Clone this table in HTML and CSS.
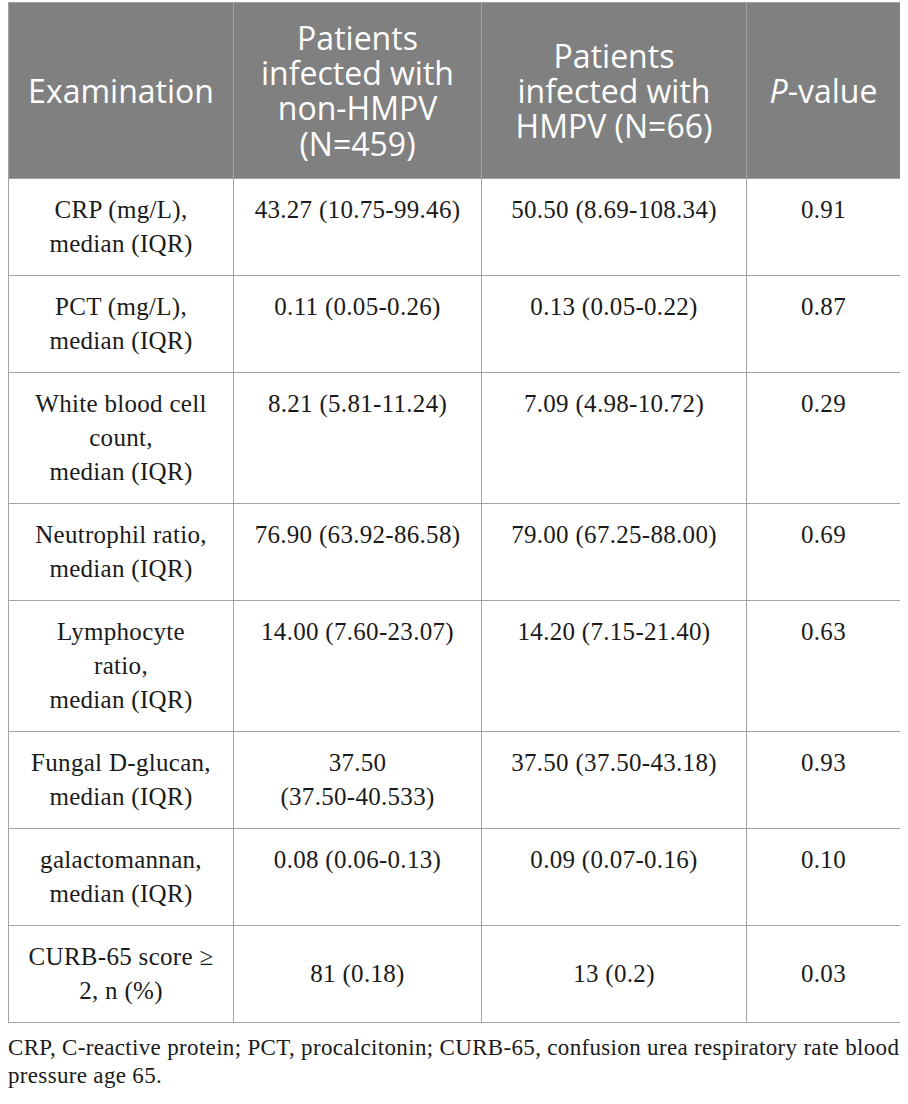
FILE: index.html
```html
<!DOCTYPE html>
<html lang="en">
<head>
<meta charset="utf-8">
<title>Examination table</title>
<link rel="stylesheet" href="styles.css">
</head>
<body>
<table class="data">
  <colgroup>
    <col class="c1">
    <col class="c2">
    <col class="c3">
    <col class="c4">
  </colgroup>
  <thead>
    <tr>
      <th>Examination</th>
      <th>Patients<br>infected with<br>non-HMPV<br>(N=459)</th>
      <th>Patients<br>infected with<br>HMPV (N=66)</th>
      <th><i>P</i>-value</th>
    </tr>
  </thead>
  <tbody>
    <tr>
      <td>CRP (mg/L),<br>median (IQR)</td>
      <td>43.27 (10.75-99.46)</td>
      <td>50.50 (8.69-108.34)</td>
      <td>0.91</td>
    </tr>
    <tr>
      <td>PCT (mg/L),<br>median (IQR)</td>
      <td>0.11 (0.05-0.26)</td>
      <td>0.13 (0.05-0.22)</td>
      <td>0.87</td>
    </tr>
    <tr>
      <td>White blood cell<br>count,<br>median (IQR)</td>
      <td>8.21 (5.81-11.24)</td>
      <td>7.09 (4.98-10.72)</td>
      <td>0.29</td>
    </tr>
    <tr>
      <td>Neutrophil ratio,<br>median (IQR)</td>
      <td>76.90 (63.92-86.58)</td>
      <td>79.00 (67.25-88.00)</td>
      <td>0.69</td>
    </tr>
    <tr>
      <td>Lymphocyte<br>ratio,<br>median (IQR)</td>
      <td>14.00 (7.60-23.07)</td>
      <td>14.20 (7.15-21.40)</td>
      <td>0.63</td>
    </tr>
    <tr>
      <td>Fungal D-glucan,<br>median (IQR)</td>
      <td>37.50<br>(37.50-40.533)</td>
      <td>37.50 (37.50-43.18)</td>
      <td>0.93</td>
    </tr>
    <tr>
      <td>galactomannan,<br>median (IQR)</td>
      <td>0.08 (0.06-0.13)</td>
      <td>0.09 (0.07-0.16)</td>
      <td>0.10</td>
    </tr>
    <tr class="mid">
      <td>CURB-65 score ≥<br>2, n (%)</td>
      <td>81 (0.18)</td>
      <td>13 (0.2)</td>
      <td>0.03</td>
    </tr>
  </tbody>
</table>
<p class="note">CRP, C-reactive protein; PCT, procalcitonin; CURB-65, confusion urea respiratory rate blood<br>pressure age 65.</p>
</body>
</html>
```
FILE: styles.css
```css
html, body {
  background: #ffffff;
}
body {
  margin: 2px 8px 0;
}
.data {
  width: 892px;
  border-collapse: collapse;
  table-layout: fixed;
}
.c1 { width: 225px; }
.c2 { width: 248px; }
.c3 { width: 265px; }
.c4 { width: 154px; }
.data th,
.data td {
  border: 1px solid #a3a3a3;
  text-align: center;
}
.data th {
  background: #808080;
  color: #ffffff;
  font-family: "Open Sans", "Noto Sans", sans-serif;
  font-weight: 400;
  font-size: 32px;
  line-height: 35.2px;
  padding: 17px 4px;
  vertical-align: middle;
}
.data th i {
  font-style: italic;
}
.data td {
  font-family: "Liberation Serif", "Times New Roman", serif;
  font-size: 25px;
  line-height: 34px;
  color: #1a1a1a;
  padding: 14px 4px;
  vertical-align: top;
  letter-spacing: 0.3px;
}
.data tr.mid td {
  vertical-align: middle;
}
.note {
  margin: 11px 0 0;
  font-family: "Liberation Serif", "Times New Roman", serif;
  font-size: 23px;
  line-height: 28px;
  letter-spacing: 0.33px;
  white-space: nowrap;
  color: #1a1a1a;
}
```
